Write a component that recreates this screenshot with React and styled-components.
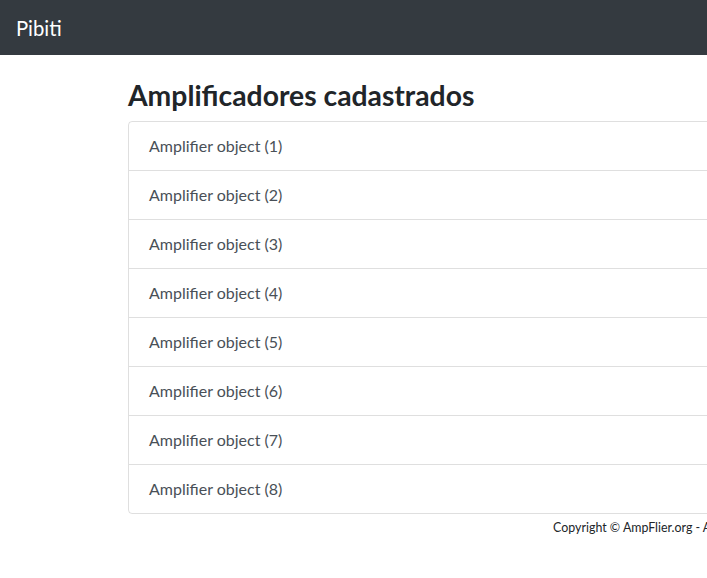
import React from "react";
import styled, { createGlobalStyle } from "styled-components";

const Global = createGlobalStyle`
  html, body { margin: 0; padding: 0; overflow-x: hidden; }
  body {
    font-family: Lato, "Noto Sans", sans-serif;
    font-size: 16px;
    line-height: 1.5;
    color: #212529;
    background: #fff;
  }
  * { box-sizing: border-box; }
`;

const Navbar = styled.nav`
  display: flex;
  align-items: center;
  height: 55px;
  padding: 8px 16px;
  background: #343a40;
`;

const Brand = styled.a`
  color: #fff;
  font-size: 20.3px;
  line-height: 30px;
  text-decoration: none;
  padding: 5px 0;
`;

const Container = styled.main`
  width: 1098px;
  margin-left: 128px;
  margin-top: 24px;
`;

const Title = styled.h3`
  margin: 0 0 8px;
  font-size: 28.3px;
  font-weight: 700;
  line-height: 33.6px;
  color: #212529;
`;

const List = styled.ul`
  list-style: none;
  margin: 0;
  padding: 0;
  border: 1px solid rgba(0, 0, 0, 0.125);
  border-radius: 4px;
`;

const Item = styled.li`
  padding: 12px 20px;
  font-size: 16px;
  line-height: 24px;
  color: #495057;
  & + & { border-top: 1px solid rgba(0, 0, 0, 0.125); }
`;

const Footer = styled.footer`
  text-align: center;
  font-size: 12.4px;
  line-height: 20px;
  padding-top: 4px;
  color: #212529;
`;

export default function App() {
  const items = [1, 2, 3, 4, 5, 6, 7, 8];
  return (
    <>
      <Global />
      <Navbar>
        <Brand href="#">Pibiti</Brand>
      </Navbar>
      <Container>
        <Title>Amplificadores cadastrados</Title>
        <List>
          {items.map((n) => (
            <Item key={n}>Amplifier object ({n})</Item>
          ))}
        </List>
        <Footer>Copyright © AmpFlier.org - All rights reserved</Footer>
      </Container>
    </>
  );
}
